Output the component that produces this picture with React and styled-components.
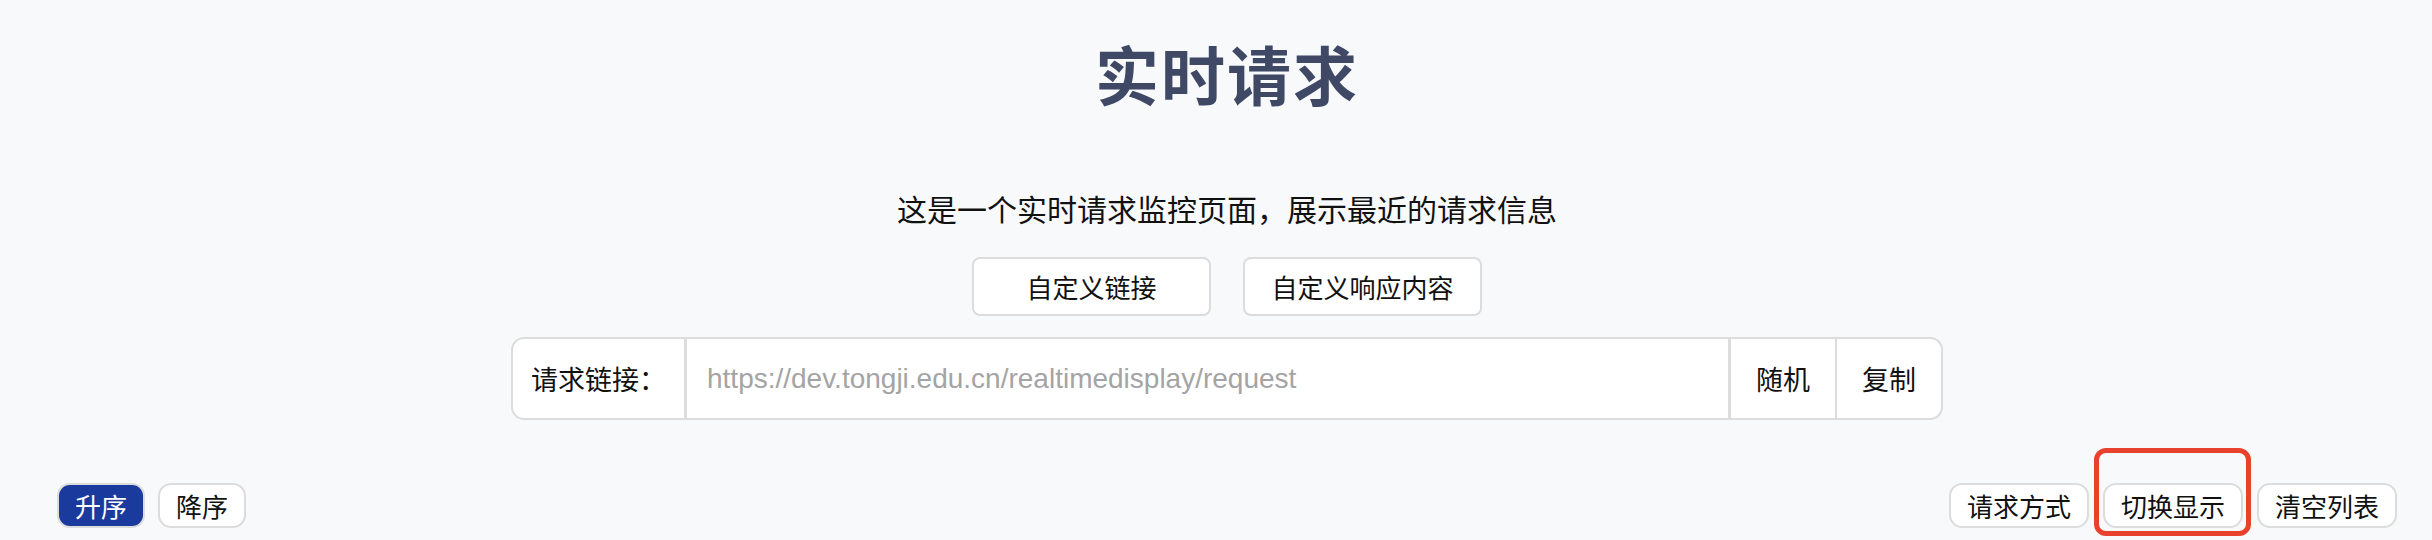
import React from "react";
import styled, { createGlobalStyle } from "styled-components";

const GlobalStyle = createGlobalStyle`
  body {
    margin: 0;
    background: #f8f9fb;
    font-family: "Noto Sans CJK SC", "Noto Sans", sans-serif;
    color: #111;
  }
`;

const Page = styled.div`
  position: relative;
  min-height: 540px;
  overflow: hidden;
`;

const Header = styled.div`
  display: flex;
  flex-direction: column;
  align-items: center;
  padding-left: 22px;
`;

const Title = styled.h1`
  margin: 40px 0 0;
  font-size: 64px;
  line-height: 64px;
  font-weight: 700;
  color: #3f4966;
  letter-spacing: 2px;
`;

const Subtitle = styled.p`
  margin: 89px 0 0;
  font-size: 30px;
  line-height: 30px;
  color: #111;
`;

const ButtonRow = styled.div`
  display: flex;
  gap: 32px;
  margin-top: 34px;
`;

const BigButton = styled.button`
  width: 239px;
  height: 59px;
  background: #fff;
  border: 2px solid #dcdcdc;
  border-radius: 8px;
  font-family: inherit;
  font-size: 26px;
  color: #111;
  padding: 0;
`;

const InputGroup = styled.div`
  display: flex;
  width: 1432px;
  height: 83px;
  margin-top: 21px;
  box-sizing: border-box;
  background: #fff;
  border: 2px solid #dcdcdc;
  border-radius: 13px;
  overflow: hidden;
`;

const Cell = styled.div`
  display: flex;
  align-items: center;
  padding: 0 ${(p) => p.$pad}px;
  font-size: 27px;
  border-right: ${(p) => p.$divider}px solid #dcdcdc;
  white-space: nowrap;
`;

const UrlInput = styled.input`
  flex: 1;
  min-width: 0;
  border: none;
  border-right: 3px solid #dcdcdc;
  outline: none;
  padding: 0 20px;
  font-family: "Liberation Sans", Arial, sans-serif;
  font-size: 28px;
  background: #fff;
  &::placeholder {
    color: #a4a4a4;
  }
`;

const Toolbar = styled.div`
  display: flex;
  justify-content: space-between;
  align-items: center;
  margin-top: 63px;
  padding: 0 35px 0 57px;
`;

const Group = styled.div`
  display: flex;
  gap: ${(p) => p.$gap}px;
`;

const Pill = styled.button`
  position: relative;
  height: 45px;
  padding: 0 16px;
  border: 2px solid #dcdcdc;
  border-radius: 13px;
  background: ${(p) => (p.$active ? "#1a3a9e" : "#fff")};
  color: ${(p) => (p.$active ? "#fff" : "#111")};
  font-family: inherit;
  font-size: 26px;
  line-height: 1;
`;

const Highlight = styled.span`
  position: absolute;
  top: -37px;
  left: -11px;
  right: -10px;
  bottom: -10px;
  border: 5px solid #e8412c;
  border-radius: 12px;
  pointer-events: none;
`;

export default function App() {
  return (
    <Page>
      <GlobalStyle />
      <Header>
        <Title>实时请求</Title>
        <Subtitle>这是一个实时请求监控页面，展示最近的请求信息</Subtitle>
        <ButtonRow>
          <BigButton>自定义链接</BigButton>
          <BigButton>自定义响应内容</BigButton>
        </ButtonRow>
        <InputGroup>
          <Cell $pad={18} $divider={3}>
            请求链接：
          </Cell>
          <UrlInput
            readOnly
            placeholder="https://dev.tongji.edu.cn/realtimedisplay/request"
          />
          <Cell $pad={25} $divider={2}>
            随机
          </Cell>
          <Cell $pad={25} $divider={0}>
            复制
          </Cell>
        </InputGroup>
      </Header>
      <Toolbar>
        <Group $gap={13}>
          <Pill $active>升序</Pill>
          <Pill>降序</Pill>
        </Group>
        <Group $gap={14}>
          <Pill>请求方式</Pill>
          <Pill>
            切换显示
            <Highlight />
          </Pill>
          <Pill>清空列表</Pill>
        </Group>
      </Toolbar>
    </Page>
  );
}
